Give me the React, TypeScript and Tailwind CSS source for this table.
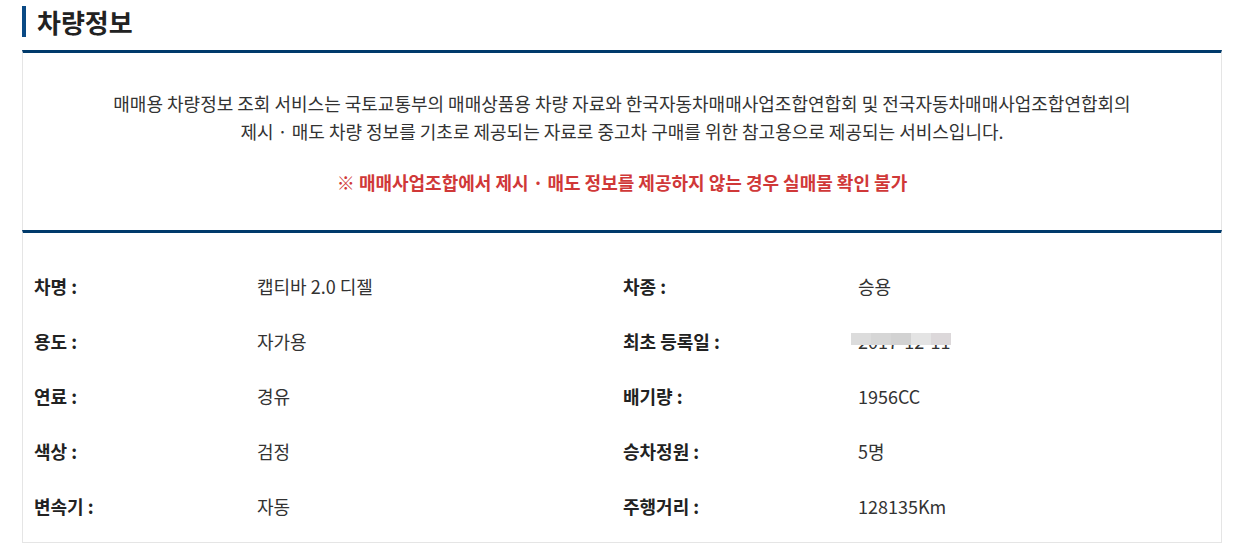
const rows: [string, string, string, string][] = [
  ['차명 :', '캡티바 2.0 디젤', '차종 :', '승용'],
  ['용도 :', '자가용', '최초 등록일 :', '2017-12-11'],
  ['연료 :', '경유', '배기량 :', '1956CC'],
  ['색상 :', '검정', '승차정원 :', '5명'],
  ['변속기 :', '자동', '주행거리 :', '128135Km'],
]

// 등록일 가림 처리용 모자이크 색
const mosaic = ['#dcdcdc', '#d6d6d6', '#d2d2d2', '#e4e4e4', '#dcd8da']

function MaskedValue({ text }: { text: string }) {
  return (
    <span className="relative inline-block">
      {text}
      <span className="absolute left-[-7px] top-[4px] flex h-[12px]">
        {mosaic.map((c) => (
          <span key={c} className="h-full w-[20px]" style={{ backgroundColor: c }} />
        ))}
      </span>
    </span>
  )
}

export default function App() {
  return (
    <div className="min-h-[549px] w-[1240px] bg-white px-[22px] pt-[6px] font-['Noto_Sans_CJK_KR','Noto_Sans',sans-serif] text-[#333]">
      <h2 className="flex h-[31px] items-center border-l-4 border-[#0a4a85] pl-[11px] text-[26px] font-bold leading-none text-[#222]">
        차량정보
      </h2>

      <section className="mt-[13px] w-[1200px] border-x border-t-[3px] border-x-[#e5e5e5] border-t-[#003a6b] pb-[34px] pt-[36px] text-center text-[18px] leading-[28px]">
        <p>
          매매용 차량정보 조회 서비스는 국토교통부의 매매상품용 차량 자료와 한국자동차매매사업조합연합회 및 전국자동차매매사업조합연합회의
          <br />
          제시 · 매도 차량 정보를 기초로 제공되는 자료로 중고차 구매를 위한 참고용으로 제공되는 서비스입니다.
        </p>
        <p className="mt-[23px] font-bold text-[#d03838]">※ 매매사업조합에서 제시 · 매도 정보를 제공하지 않는 경우 실매물 확인 불가</p>
      </section>

      <section className="w-[1200px] border-x border-b border-t-[3px] border-x-[#e5e5e5] border-b-[#e5e5e5] border-t-[#003a6b] bg-white pb-[9px] pt-[25px] text-[18px] leading-[24px]">
        {rows.map(([l1, v1, l2, v2]) => (
          <div key={l1} className="grid h-[55px] grid-cols-[223px_366px_235px_1fr] items-center px-[11px]">
            <span className="font-bold text-[#222]">{l1}</span>
            <span>{v1}</span>
            <span className="font-bold text-[#222]">{l2}</span>
            <span>{l2.startsWith('최초') ? <MaskedValue text={v2} /> : v2}</span>
          </div>
        ))}
      </section>
    </div>
  )
}
